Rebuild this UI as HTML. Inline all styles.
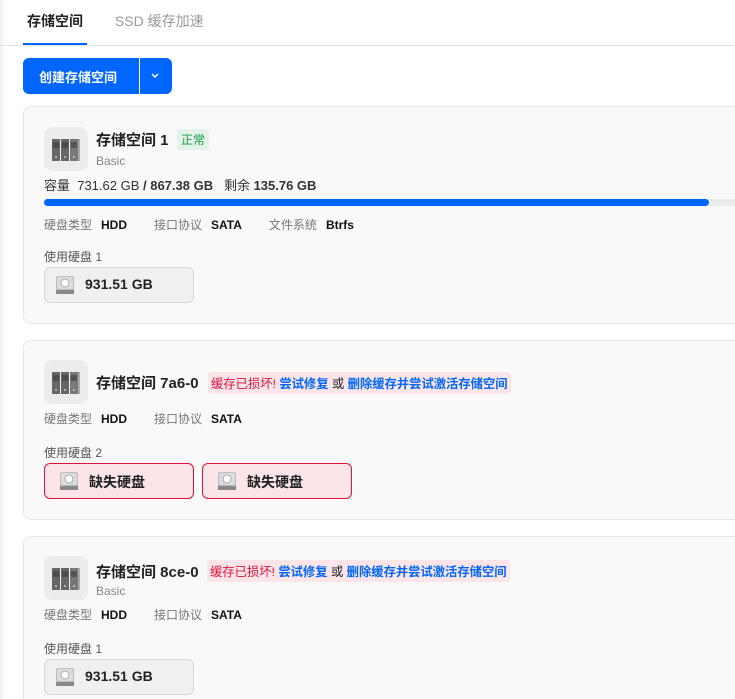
<!DOCTYPE html>
<html style="width:735px;height:699px;overflow:hidden"><head><meta charset="utf-8"><style>
*{box-sizing:border-box;margin:0;padding:0}
body{width:735px;height:699px;overflow:hidden;background:#fff;font-family:"Liberation Sans","Noto Sans CJK SC",sans-serif;color:#222;position:relative}
.abs{position:absolute}
.tabs{left:0;top:0;width:735px;height:46px;border-bottom:1px solid #e3e3e3}
.card{left:23px;width:712px;background:#f9f9f9;border:1px solid #e6e6e6;border-right:none;border-radius:8px 0 0 8px}
.ico{width:44px;height:44px;background:#ececec;border-radius:8px}
.t{font-size:15px;font-weight:bold;color:#222;white-space:nowrap}
.s{font-size:12px;color:#888;white-space:nowrap}
.lbl{font-size:12px;color:#777;white-space:nowrap}
.lbl b{color:#111;margin-left:9px;margin-right:27px}
.disk{width:150px;height:36px;border:1px solid #d6d6d6;border-radius:6px;background:#f0f0f0;font-size:14px;font-weight:bold}
.disk.bad{border-color:#e0113a;background:#fbe5e8}
.badge{font-size:12.3px;padding:2px 3px;border-radius:3px;background:#fbe5e8;white-space:nowrap}
.badge .l{color:#0066ff;font-weight:bold}
</style></head><body>
<div class="abs" style="left:0;top:0;width:3px;height:699px;background:#f2f2f2"></div>
<div class="abs tabs"></div>
<div class="abs" style="left:27px;top:11px;font-size:14px;font-weight:bold">存储空间</div>
<div class="abs" style="left:115px;top:11px;font-size:14px;color:#999">SSD 缓存加速</div>
<div class="abs" style="left:23px;top:43px;width:64px;height:2px;background:#0066ff"></div>
<div class="abs" style="left:23px;top:58px;width:149px;height:36px;background:#0066ff;border-radius:6px"></div>
<div class="abs" style="left:139px;top:58px;width:1px;height:36px;background:#fff"></div>
<div class="abs" style="left:39px;top:67px;font-size:13px;font-weight:bold;color:#fff">创建存储空间</div>
<svg class="abs" style="left:150px;top:72px" width="10" height="8"><path d="M2 2l3 3 3-3" stroke="#fff" stroke-width="1.5" fill="none"/></svg>

<svg width="0" height="0" style="position:absolute"><defs>
<g id="srv"><rect x="8" y="12" width="8" height="22" fill="#666"/><rect x="17" y="12" width="8" height="22" fill="#666"/><rect x="26" y="12" width="8" height="22" fill="#777"/><rect x="34" y="12" width="2" height="22" fill="#aaa"/>
<path d="M9 16h6M9 18h6M9 20h6M18 16h6M18 18h6M18 20h6M27 16h6M27 18h6M27 20h6" stroke="#333"/>
<circle cx="12" cy="30" r="1" fill="#ccc"/><circle cx="21" cy="30" r="1" fill="#ccc"/><circle cx="30" cy="30" r="1" fill="#ccc"/></g>
<g id="hdd"><rect x="0" y="0" width="18" height="18" rx="2" fill="#bbb"/><rect x="1" y="1" width="16" height="12" rx="2" fill="#ddd"/><circle cx="9" cy="7" r="4" fill="#fff" stroke="#aaa"/><rect x="0" y="14" width="18" height="4" fill="#888"/></g>
</defs></svg>

<!-- card1 -->
<div class="abs card" style="top:106px;height:218px"></div>
<div class="abs ico" style="left:44px;top:127px"><svg width="44" height="44"><use href="#srv"/></svg></div>
<div class="abs t" style="left:96px;top:129px">存储空间 1</div>
<div class="abs" style="left:177px;top:129px;font-size:12px;color:#1a9a4a;background:#e1f4e7;padding:2px 4px;border-radius:3px">正常</div>
<div class="abs s" style="left:96px;top:154px">Basic</div>
<div class="abs" style="left:44px;top:175px;font-size:13px;color:#333;white-space:nowrap">容量&nbsp; 731.62 GB <b>/ 867.38 GB</b> &nbsp;&nbsp;剩余 <b>135.76 GB</b></div>
<div class="abs" style="left:44px;top:199px;width:691px;height:7px;background:#ececec;border-radius:4px 0 0 4px"></div>
<div class="abs" style="left:44px;top:199px;width:665px;height:7px;background:#0066ff;border-radius:4px"></div>
<div class="abs lbl" style="left:44px;top:216px">硬盘类型<b>HDD</b>接口协议<b>SATA</b>文件系统<b>Btrfs</b></div>
<div class="abs s" style="left:44px;top:248px;color:#555">使用硬盘 1</div>
<div class="abs disk" style="left:44px;top:267px"><svg class="abs" style="left:11px;top:8px" width="18" height="18"><use href="#hdd"/></svg><span class="abs" style="left:40px;top:8px">931.51 GB</span></div>

<!-- card2 -->
<div class="abs card" style="top:340px;height:180px"></div>
<div class="abs ico" style="left:44px;top:360px"><svg width="44" height="44"><use href="#srv"/></svg></div>
<div class="abs t" style="left:96px;top:372px">存储空间 7a6-0</div>
<div class="abs badge" style="left:208px;top:372px"><span style="color:#e0113a">缓存已损坏!</span> <span class="l">尝试修复</span> 或 <span class="l">删除缓存并尝试激活存储空间</span></div>
<div class="abs lbl" style="left:44px;top:410px">硬盘类型<b>HDD</b>接口协议<b>SATA</b></div>
<div class="abs s" style="left:44px;top:444px;color:#555">使用硬盘 2</div>
<div class="abs disk bad" style="left:44px;top:463px"><svg class="abs" style="left:15px;top:8px" width="18" height="18"><use href="#hdd"/></svg><span class="abs" style="left:44px;top:8px">缺失硬盘</span></div>
<div class="abs disk bad" style="left:202px;top:463px"><svg class="abs" style="left:15px;top:8px" width="18" height="18"><use href="#hdd"/></svg><span class="abs" style="left:44px;top:8px">缺失硬盘</span></div>

<!-- card3 -->
<div class="abs card" style="top:536px;height:163px;border-bottom:none;border-radius:8px 0 0 0"></div>
<div class="abs ico" style="left:44px;top:556px"><svg width="44" height="44"><use href="#srv"/></svg></div>
<div class="abs t" style="left:96px;top:561px">存储空间 8ce-0</div>
<div class="abs badge" style="left:207px;top:560px"><span style="color:#e0113a">缓存已损坏!</span> <span class="l">尝试修复</span> 或 <span class="l">删除缓存并尝试激活存储空间</span></div>
<div class="abs s" style="left:96px;top:584px">Basic</div>
<div class="abs lbl" style="left:44px;top:606px">硬盘类型<b>HDD</b>接口协议<b>SATA</b></div>
<div class="abs s" style="left:44px;top:640px;color:#555">使用硬盘 1</div>
<div class="abs disk" style="left:44px;top:659px"><svg class="abs" style="left:11px;top:8px" width="18" height="18"><use href="#hdd"/></svg><span class="abs" style="left:40px;top:8px">931.51 GB</span></div>
</body></html>
